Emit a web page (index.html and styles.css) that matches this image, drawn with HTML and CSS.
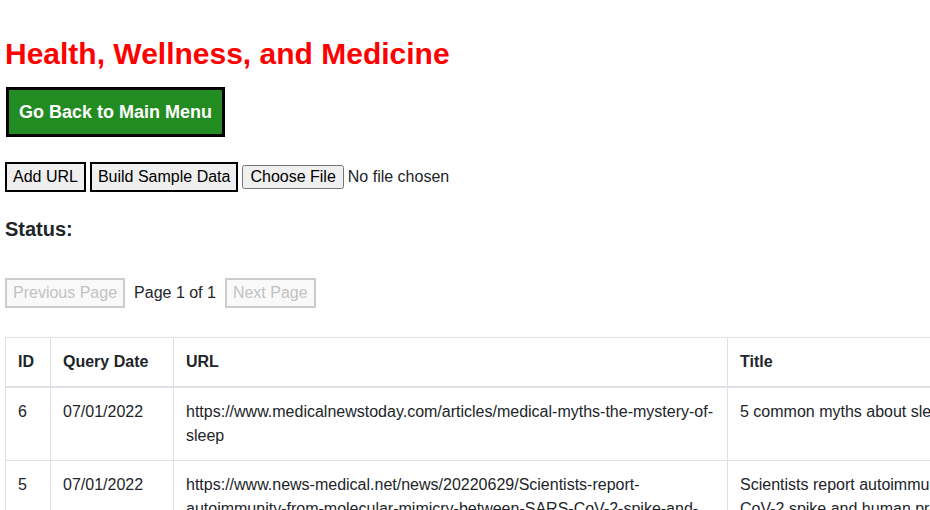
FILE: index.html
```html
<!DOCTYPE html>
<html lang="en">
<head>
<meta charset="utf-8">
<title>Health, Wellness, and Medicine</title>
<link rel="stylesheet" href="styles.css">
</head>
<body>
<main class="page">
  <h1 class="page-title">Health, Wellness, and Medicine</h1>
  <div class="back-row">
    <button class="btn-back" type="button">Go Back to Main Menu</button>
  </div>
  <div class="tools">
    <button class="btn-tool" type="button">Add URL</button>
    <button class="btn-tool" type="button">Build Sample Data</button>
    <input class="file-input" type="file">
  </div>
  <h3 class="status">Status:</h3>
  <div class="pager">
    <button class="btn-page" type="button" disabled>Previous Page</button>
    <span class="page-info">Page 1 of 1</span>
    <button class="btn-page" type="button" disabled>Next Page</button>
  </div>
  <table class="data-table">
    <colgroup>
      <col class="c-id">
      <col class="c-date">
      <col class="c-url">
      <col class="c-title">
    </colgroup>
    <thead>
      <tr><th>ID</th><th>Query Date</th><th>URL</th><th>Title</th></tr>
    </thead>
    <tbody>
      <tr>
        <td>6</td>
        <td>07/01/2022</td>
        <td>https://www.medicalnewstoday.com/articles/medical-myths-the-mystery-of-sleep</td>
        <td>5 common myths about sleep</td>
      </tr>
      <tr>
        <td>5</td>
        <td>07/01/2022</td>
        <td>https://www.news-medical.net/news/20220629/Scientists-report-autoimmunity-from-molecular-mimicry-between-SARS-CoV-2-spike-and-human-proteins.aspx</td>
        <td>Scientists report autoimmunity from molecular mimicry between SARS-CoV-2 spike and human proteins</td>
      </tr>
    </tbody>
  </table>
</main>
</body>
</html>
```

FILE: styles.css
```css
html, body {
  margin: 0;
  padding: 0;
  overflow: hidden;
  background: #ffffff;
}

body {
  font-family: "Liberation Sans", Arial, sans-serif;
  font-size: 16px;
  color: #212529;
}

.page {
  padding: 37px 0 0 5px;
}

.page-title {
  margin: 0 0 16px;
  font-size: 30px;
  line-height: 34px;
  font-weight: bold;
  color: #ff0000;
}

.back-row {
  display: flex;
  padding-left: 1px;
}

.btn-back {
  font-family: "Liberation Sans", Arial, sans-serif;
  font-size: 18px;
  font-weight: bold;
  line-height: 20px;
  color: #ffffff;
  background: #228b22;
  border: 3px solid #000000;
  padding: 12px 10px;
  margin: 0;
  border-radius: 0;
}

.tools {
  display: flex;
  align-items: center;
  gap: 4px;
  margin-top: 25px;
  height: 30px;
}

.btn-tool {
  font-family: "Liberation Sans", Arial, sans-serif;
  font-size: 16px;
  line-height: 18px;
  color: #000000;
  background: #efefef;
  border: 2px solid #000000;
  padding: 4px 6px;
  margin: 0;
  border-radius: 0;
}

.file-input {
  font-family: "Liberation Sans", Arial, sans-serif;
  font-size: 16px;
  color: #212529;
  margin: 0;
}

.status {
  margin: 26px 0 0;
  font-size: 20px;
  line-height: 23px;
  font-weight: bold;
  color: #212529;
}

.pager {
  display: flex;
  align-items: center;
  gap: 9px;
  margin-top: 37px;
  height: 30px;
}

.btn-page {
  font-family: "Liberation Sans", Arial, sans-serif;
  font-size: 16px;
  line-height: 18px;
  color: #c2c2c2;
  background: #f9f9f9;
  border: 2px solid #cccccc;
  padding: 4px 6px;
  margin: 0;
  border-radius: 0;
}

.page-info {
  color: #212529;
}

.data-table {
  margin-top: 29px;
  border-collapse: collapse;
  table-layout: fixed;
  width: 1276px;
  line-height: 24px;
  color: #212529;
}

.c-id { width: 45px; }
.c-date { width: 123px; }
.c-url { width: 554px; }
.c-title { width: 554px; }

.data-table th,
.data-table td {
  border: 1px solid #dee2e6;
  padding: 12px;
  text-align: left;
  vertical-align: top;
}

.data-table th {
  font-weight: bold;
  border-bottom: 2px solid #dee2e6;
}
```
